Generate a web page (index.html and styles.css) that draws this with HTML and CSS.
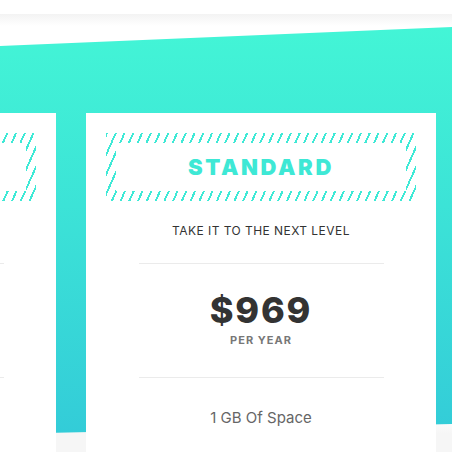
FILE: index.html
```html
<!DOCTYPE html>
<html>
<head>
<meta charset="utf-8">
<title>Pricing</title>
<link rel="stylesheet" href="styles.css">
</head>
<body>
<div class="topbar"></div>
<section class="pricing">
  <div class="cards">
    <article class="card">
      <div class="plan-box"><h2 class="plan-name">BASIC</h2></div>
      <p class="tagline">GET STARTED TODAY</p>
      <hr class="divider">
      <div class="price">$469</div>
      <div class="period">PER YEAR</div>
      <hr class="divider divider-low">
      <p class="feature">500 MB Of Space</p>
    </article>
    <article class="card">
      <div class="plan-box"><h2 class="plan-name">STANDARD</h2></div>
      <p class="tagline">TAKE IT TO THE NEXT LEVEL</p>
      <hr class="divider">
      <div class="price">$969</div>
      <div class="period">PER YEAR</div>
      <hr class="divider divider-low">
      <p class="feature">1 GB Of Space</p>
    </article>
    <article class="card">
      <div class="plan-box"><h2 class="plan-name">PREMIUM</h2></div>
      <p class="tagline">FOR THE PROFESSIONALS</p>
      <hr class="divider">
      <div class="price">$1469</div>
      <div class="period">PER YEAR</div>
      <hr class="divider divider-low">
      <p class="feature">5 GB Of Space</p>
    </article>
  </div>
</section>
</body>
</html>
```

FILE: styles.css
```css
html, body {
  margin: 0;
  padding: 0;
  background: #fff;
}
body {
  width: 452px;
  height: 452px;
  overflow: hidden;
  font-family: "Inter", "Liberation Sans", sans-serif;
}
.topbar {
  height: 14px;
  background: #fff;
}
.pricing {
  position: relative;
  height: 438px;
  padding-top: 99px;
  box-sizing: border-box;
  overflow: hidden;
  background: linear-gradient(to bottom, #f3f3f3 0, #fff 12px, #fff 400px, #f6f6f6 420px);
}
.pricing::before {
  content: "";
  position: absolute;
  inset: 0;
  background: linear-gradient(to bottom, #43f5d6 13px, #33ccd8 420px);
  clip-path: polygon(0 32px, 100% 13px, 100% 410px, 0 420px);
}
.cards {
  position: relative;
  display: flex;
  gap: 30px;
  margin-left: -294px;
}
.card {
  flex: 0 0 350px;
  box-sizing: border-box;
  min-height: 400px;
  padding: 20px 20px 40px;
  background: #fff;
  text-align: center;
}
.plan-box {
  height: 68px;
  padding: 10px;
  box-sizing: border-box;
  background: repeating-linear-gradient(114deg, #3fe9d6 0 1.9px, transparent 1.9px 8px);
}
.plan-name {
  margin: 0;
  height: 48px;
  background: #fff;
  display: flex;
  align-items: center;
  justify-content: center;
  font-size: 22px;
  font-weight: 900;
  letter-spacing: 2.6px;
  color: #3ee8d5;
}
.tagline {
  margin: 22px 0 0;
  font-size: 12px;
  line-height: 16px;
  letter-spacing: 0.45px;
  color: #333;
}
.divider {
  width: 245px;
  height: 1px;
  margin: 24px auto 0;
  border: 0;
  background: #ebebeb;
}
.price {
  margin-top: 26px;
  font-size: 36px;
  line-height: 40px;
  font-weight: 800;
  letter-spacing: 1.8px;
  color: #333;
}
.period {
  margin-top: 3px;
  font-size: 11px;
  line-height: 14px;
  font-weight: 700;
  letter-spacing: 1px;
  color: #777;
}
.divider-low {
  margin-top: 30px;
}
.feature {
  margin: 30px 0 0;
  font-size: 15px;
  line-height: 20px;
  color: #666;
}
```
